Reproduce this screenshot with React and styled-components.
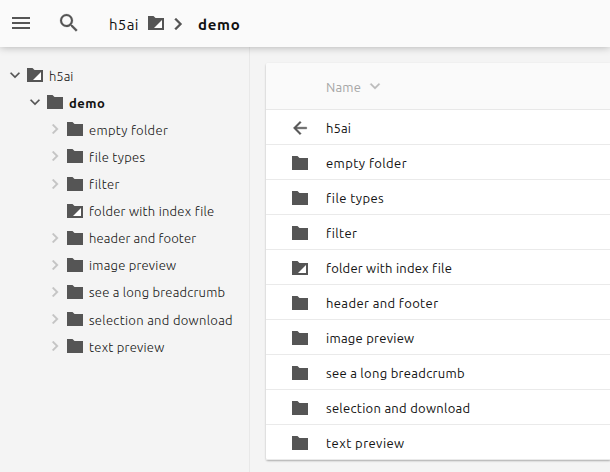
import React from "react";
import styled, { createGlobalStyle } from "styled-components";

const GlobalStyle = createGlobalStyle`
  * { box-sizing: border-box; }
  body {
    margin: 0;
    background: #f4f4f4;
    color: #111;
    font-family: "Ubuntu", "Noto Sans", sans-serif;
    font-size: 13px;
    overflow: hidden;
  }
  svg { display: block; flex: none; }
`;

const Page = styled.div`
  display: flex;
  flex-direction: column;
  height: 100vh;
`;

const TopBar = styled.header`
  position: relative;
  z-index: 1;
  display: flex;
  align-items: center;
  flex: none;
  height: 47px;
  padding: 0 0 1px 9px;
  background: #fafafa;
  box-shadow: 0 0 8px rgba(0, 0, 0, 0.3);
`;

const ToolButton = styled.button`
  display: flex;
  width: 24px;
  height: 24px;
  margin: 0 24px 0 0;
  padding: 0;
  border: 0;
  background: none;
  color: #555;
`;

const Crumbs = styled.nav`
  display: flex;
  align-items: center;
  margin-left: 4px;
  color: #555;
`;

const Crumb = styled.a`
  width: ${(p) => p.$width}px;
  margin-top: 3px;
  color: #111;
  font-size: 15px;
  font-weight: ${(p) => (p.$current ? 700 : 400)};
  letter-spacing: ${(p) => p.$track || 0}px;
  line-height: 20px;
  white-space: nowrap;
`;

const CrumbSeparator = styled.span`
  display: flex;
  margin: 2px 8px 0 2px;
`;

const Body = styled.div`
  display: flex;
  flex: 1;
  min-height: 0;
`;

const Sidebar = styled.aside`
  flex: none;
  width: 250px;
  padding-top: 14.6px;
  border-right: 1px solid #e8e8e8;
`;

const TreeRow = styled.div`
  display: flex;
  align-items: center;
  height: 27.1px;
  padding-left: ${(p) => 5 + p.$depth * 20}px;
  color: #555;
`;

const Toggle = styled.span`
  width: 20px;
  height: 20px;
  margin-right: 2px;
  color: ${(p) => (p.$open ? "#555" : "#c4c4c4")};
`;

const TreeLabel = styled.span`
  margin: 1.1px 0 0 6px;
  color: #111;
  font-weight: ${(p) => (p.$current ? 700 : 300)};
  letter-spacing: ${(p) => p.$track || 0}px;
  line-height: 20px;
  white-space: nowrap;
`;

const Content = styled.main`
  flex: 1;
  min-width: 0;
  padding: 16px 0 0 16px;
`;

const Listing = styled.div`
  background: #fff;
  border-radius: 2px 0 0 2px;
  box-shadow: 0 1px 2px rgba(0, 0, 0, 0.3);
`;

const ListHeader = styled.div`
  display: flex;
  align-items: center;
  height: 47px;
  padding: 2px 0 0 60px;
  border-bottom: 1px solid #e8e8e8;
  border-radius: 2px 0 0 0;
  background: #fafafa;
  color: #a6a6a6;

  svg {
    margin-bottom: 2px;
    color: #bbb;
  }
`;

const HeaderLabel = styled.span`
  width: 39px;
  letter-spacing: ${(p) => p.$track || 0}px;
  line-height: 20px;
`;

const ListRow = styled.a`
  display: flex;
  align-items: center;
  height: 35px;
  border-bottom: 1px solid #eaeaea;
  color: #555;
`;

const IconCell = styled.span`
  display: flex;
  justify-content: center;
  width: 20px;
  margin: 1px 16px 0 24px;
`;

const ItemLabel = styled.span`
  margin-top: 1px;
  color: #111;
  letter-spacing: ${(p) => p.$track || 0}px;
  line-height: 20px;
  white-space: nowrap;
`;

const Glyph = ({ size = 20, d, weight = 0 }) => (
  <svg
    width={size}
    height={size}
    viewBox="0 0 24 24"
    fill="currentColor"
    stroke="currentColor"
    strokeWidth={weight}
  >
    <path d={d} />
  </svg>
);

const MENU = "M3 6h18v2H3zM3 11h18v2H3zM3 16h18v2H3z";
const SEARCH =
  "M15.5 14h-.79l-.28-.27A6.471 6.471 0 0 0 16 9.5 6.5 6.5 0 1 0 9.5 16c1.61 0 3.09-.59 4.23-1.57l.27.28v.79l5 4.99L20.49 19l-4.99-5zm-6 0C7.01 14 5 11.99 5 9.5S7.01 5 9.5 5 14 7.01 14 9.5 11.99 14 9.5 14z";
const DOWN = "M16.59 8.59 12 13.17 7.41 8.59 6 10l6 6 6-6z";
const RIGHT = "M10 6 8.59 7.41 13.17 12l-4.58 4.59L10 18l6-6z";
const BACK = "M20 11H7.83l5.59-5.59L12 4l-8 8 8 8 1.41-1.41L7.83 13H20v-2z";

const Folder = ({ page }) => (
  <svg width="16" height="14" viewBox="0 0 16 14">
    <path d="M0 0h5.5l2 2H16v12H0z" fill="#555" />
    {page && <path d="M14 4V12H6z" fill="#fff" />}
  </svg>
);

const folders = [
  { name: "empty folder", treeTrack: 0.34, listTrack: 0.42 },
  { name: "file types", treeTrack: 0.32, listTrack: 0.42 },
  { name: "filter", treeTrack: 0.33, listTrack: 0.33 },
  { name: "folder with index file", page: true, treeTrack: 0.26, listTrack: 0.21 },
  { name: "header and footer", treeTrack: 0.14, listTrack: 0.38 },
  { name: "image preview", treeTrack: 0.24, listTrack: 0.25 },
  { name: "see a long breadcrumb", treeTrack: 0.24, listTrack: 0.29 },
  { name: "selection and download", treeTrack: 0.32, listTrack: 0.27 },
  { name: "text preview", treeTrack: 0.26, listTrack: 0.44 },
];

export default function App() {
  return (
    <Page>
      <GlobalStyle />
      <TopBar>
        <ToolButton aria-label="Menu"><Glyph size={24} d={MENU} /></ToolButton>
        <ToolButton aria-label="Search"><Glyph size={24} d={SEARCH} weight={0.2} /></ToolButton>
        <Crumbs>
          <Crumb $width={39} $track={0.3}>h5ai</Crumb>
          <Folder page />
          <CrumbSeparator><Glyph size={24} d={RIGHT} weight={0.3} /></CrumbSeparator>
          <Crumb $width={44} $current $track={0.7}>demo</Crumb>
        </Crumbs>
      </TopBar>
      <Body>
        <Sidebar>
          <TreeRow $depth={0}>
            <Toggle $open><Glyph d={DOWN} weight={0.1} /></Toggle>
            <Folder page />
            <TreeLabel>h5ai</TreeLabel>
          </TreeRow>
          <TreeRow $depth={1}>
            <Toggle $open><Glyph d={DOWN} weight={0.1} /></Toggle>
            <Folder />
            <TreeLabel $current $track={0.5}>demo</TreeLabel>
          </TreeRow>
          {folders.map((f) => (
            <TreeRow $depth={2} key={f.name}>
              <Toggle>{!f.page && <Glyph d={RIGHT} weight={0.3} />}</Toggle>
              <Folder page={f.page} />
              <TreeLabel $track={f.treeTrack}>{f.name}</TreeLabel>
            </TreeRow>
          ))}
        </Sidebar>
        <Content>
          <Listing>
            <ListHeader>
              <HeaderLabel $track={0.2}>Name</HeaderLabel>
              <Glyph d={DOWN} weight={0.3} />
            </ListHeader>
            <ListRow>
              <IconCell><Glyph d={BACK} weight={0.5} /></IconCell>
              <ItemLabel $track={0.1}>h5ai</ItemLabel>
            </ListRow>
            {folders.map((f) => (
              <ListRow key={f.name}>
                <IconCell><Folder page={f.page} /></IconCell>
                <ItemLabel $track={f.listTrack}>{f.name}</ItemLabel>
              </ListRow>
            ))}
          </Listing>
        </Content>
      </Body>
    </Page>
  );
}
